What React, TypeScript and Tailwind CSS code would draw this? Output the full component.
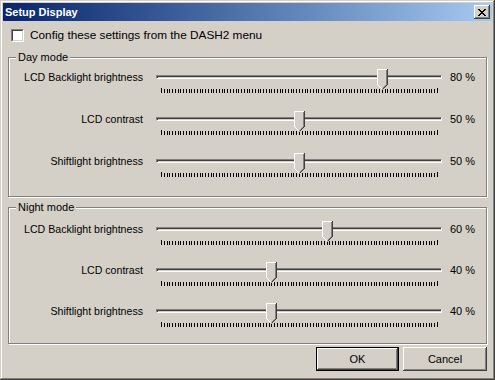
import React from 'react';

const FACE = '#d4d0c8';
const TICKS = Array.from({ length: 101 }, (_, i) => Math.round(5 + i * 2.76));

type Row = { label: string; value: number };

const dayRows: Row[] = [
    { label: 'LCD Backlight brightness', value: 80 },
    { label: 'LCD contrast', value: 50 },
    { label: 'Shiftlight brightness', value: 50 },
];

const nightRows: Row[] = [
    { label: 'LCD Backlight brightness', value: 60 },
    { label: 'LCD contrast', value: 40 },
    { label: 'Shiftlight brightness', value: 40 },
];

const Slider: React.FC<{ value: number }> = ({ value }) => {
    const x = 5 + Math.round(value * 2.76);
    return (
        <div className="relative w-[286px] h-[26px]">
            {/* sunken track */}
            <div className="absolute left-0 right-0 top-[6px] h-[4px] border border-t-[#808080] border-l-[#808080] border-b-white border-r-white">
                <div className="h-full border-t border-l border-t-[#404040] border-l-[#404040]" />
            </div>
            {/* tick marks */}
            <svg className="absolute left-0 top-[19px]" width="286" height="6" shapeRendering="crispEdges">
                {TICKS.map((t, i) => (
                    <line
                        key={i}
                        x1={t + 0.5}
                        x2={t + 0.5}
                        y1={i === 0 || i === 100 ? 0 : 1}
                        y2={5}
                        stroke="#000"
                        strokeWidth="1"
                    />
                ))}
            </svg>
            {/* thumb */}
            <svg className="absolute top-0" style={{ left: x - 5 }} width="11" height="21" shapeRendering="crispEdges">
                <polygon points="0,0 11,0 11,16 5.5,21 0,16" fill={FACE} />
                <polyline points="0.5,16 0.5,0.5 10,0.5" fill="none" stroke="#fff" />
                <line x1="0.5" y1="15.5" x2="5.5" y2="20.5" stroke="#fff" shapeRendering="auto" />
                <polyline points="10.5,0 10.5,15.5" fill="none" stroke="#404040" />
                <line x1="10.5" y1="15.5" x2="5.5" y2="20.5" stroke="#404040" shapeRendering="auto" />
                <polyline points="9.5,1 9.5,15.5" fill="none" stroke="#808080" />
                <line x1="9.5" y1="15.5" x2="5.5" y2="19.5" stroke="#808080" shapeRendering="auto" />
            </svg>
        </div>
    );
};

const SliderRow: React.FC<{ row: Row }> = ({ row }) => (
    <div className="flex items-start">
        <div className="w-[134px] h-[16px] leading-[16px] text-right text-[10.6px]">{row.label}</div>
        <div className="ml-[13px]">
            <Slider value={row.value} />
        </div>
        <div className="ml-[8px] h-[16px] leading-[16px]">{row.value} %</div>
    </div>
);

const GroupBox: React.FC<{ title: string; rows: Row[]; className?: string; pad: string }> = ({
    title,
    rows,
    className,
    pad,
}) => (
    <div
        className={`relative border border-[#808080] shadow-[inset_1px_1px_#ffffff,1px_1px_#ffffff] ${className ?? ''}`}
    >
        <span className="absolute -top-[9px] left-[7px] px-[2px] bg-[#d4d0c8] leading-[16px]">{title}</span>
        <div className={`flex flex-col ${pad}`}>
            {rows.map((r) => (
                <SliderRow key={r.label} row={r} />
            ))}
        </div>
    </div>
);

const App: React.FC = () => {
    return (
        <div
            className="w-[495px] h-[380px] bg-[#d4d0c8] p-[3px] text-[11px] text-black shadow-[inset_-1px_-1px_#404040,inset_1px_1px_#d4d0c8,inset_-2px_-2px_#808080,inset_2px_2px_#ffffff]"
            style={{ fontFamily: '"Liberation Sans", Arial, sans-serif' }}
        >
            {/* title bar */}
            <div className="h-[18px] flex items-center justify-between pl-[2px] pr-[2px] bg-gradient-to-r from-[#0a246a] to-[#a6caf0]">
                <span className="text-white font-bold text-[11px]">Setup Display</span>
                <div className="w-[16px] h-[14px] bg-[#d4d0c8] flex items-center justify-center shadow-[inset_-1px_-1px_#404040,inset_1px_1px_#ffffff,inset_-2px_-2px_#808080]">
                    <svg width="8" height="7" shapeRendering="crispEdges">
                        <path d="M0 0h2v1h-2zM6 0h2v1h-2zM1 1h2v1h-2zM5 1h2v1h-2zM2 2h4v1h-4zM3 3h2v1h-2zM2 4h4v1h-4zM1 5h2v1h-2zM5 5h2v1h-2zM0 6h2v1h-2zM6 6h2v1h-2z" fill="#000" />
                    </svg>
                </div>
            </div>

            <div className="px-[5px]">
                {/* checkbox */}
                <div className="flex items-center mt-[8px] ml-[3px] h-[13px]">
                    <div className="w-[13px] h-[13px] bg-white border border-t-[#808080] border-l-[#808080] border-b-white border-r-white">
                        <div className="w-full h-full border-t border-l border-t-[#404040] border-l-[#404040] border-b border-r border-b-[#d4d0c8] border-r-[#d4d0c8]" />
                    </div>
                    <span className="ml-[6px] text-[11.8px]">Config these settings from the DASH2 menu</span>
                </div>

                <GroupBox title="Day mode" rows={dayRows} className="mt-[15px] h-[140px]" pad="pt-[11px] gap-[16px]" />
                <GroupBox title="Night mode" rows={nightRows} className="mt-[10px] h-[137px]" pad="pt-[13px] gap-[15px]" />

                {/* buttons */}
                <div className="flex justify-end gap-[4px] mt-[3px]">
                    <button className="w-[83px] h-[24px] border border-black bg-[#d4d0c8] shadow-[inset_-1px_-1px_#404040,inset_1px_1px_#ffffff,inset_-2px_-2px_#808080]">
                        OK
                    </button>
                    <button className="w-[84px] h-[24px] bg-[#d4d0c8] shadow-[inset_-1px_-1px_#404040,inset_1px_1px_#ffffff,inset_-2px_-2px_#808080]">
                        Cancel
                    </button>
                </div>
            </div>
        </div>
    );
};

export default App;
